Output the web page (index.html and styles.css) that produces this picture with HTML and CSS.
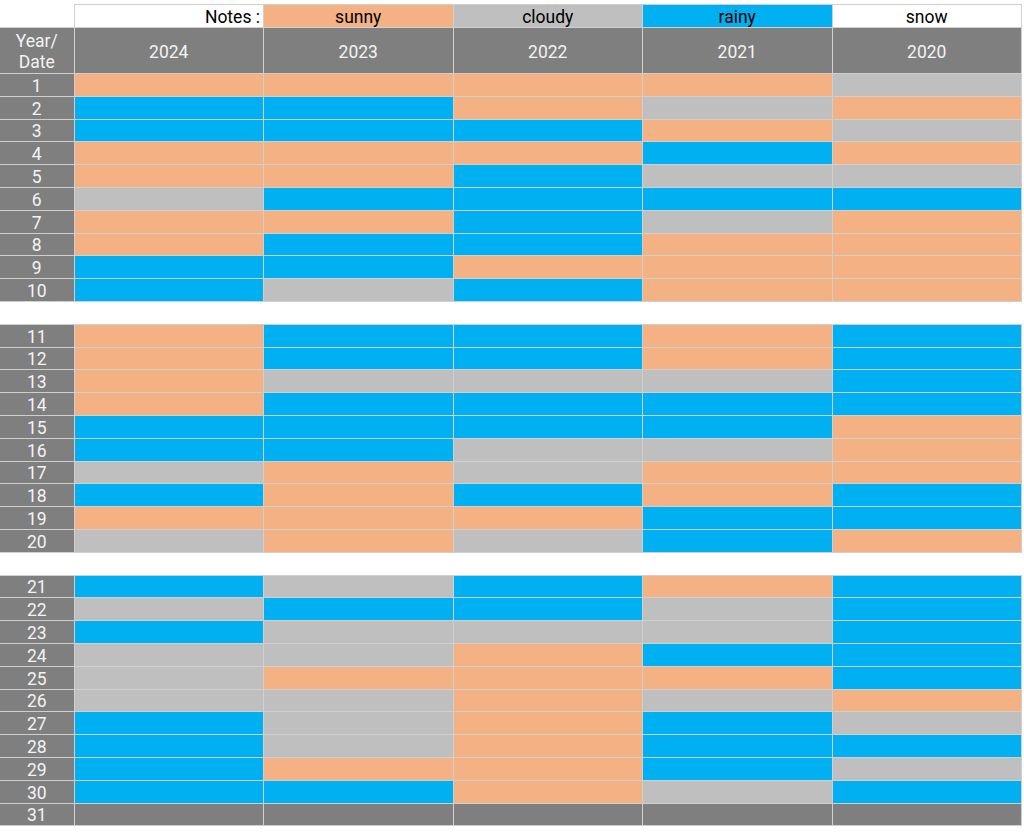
FILE: index.html
```html
<!DOCTYPE html>
<html>
<head>
<meta charset="utf-8">
<link rel="stylesheet" href="styles.css">
</head>
<body>
<table class="sheet">
<colgroup><col class="c-day"><col class="c-yr"><col class="c-yr"><col class="c-yr"><col class="c-yr"><col class="c-yr"></colgroup>
<tr class="notes"><td class="blank"></td><td class="label">Notes :</td><td class="s">sunny</td><td class="c">cloudy</td><td class="r">rainy</td><td class="w">snow</td></tr>
<tr class="head"><td class="g">Year/<br>Date</td><td class="g">2024</td><td class="g">2023</td><td class="g">2022</td><td class="g">2021</td><td class="g">2020</td></tr>
<tr class="d"><td class="g">1</td><td class="s"></td><td class="s"></td><td class="s"></td><td class="s"></td><td class="c"></td></tr>
<tr class="d"><td class="g">2</td><td class="r"></td><td class="r"></td><td class="s"></td><td class="c"></td><td class="s"></td></tr>
<tr class="d"><td class="g">3</td><td class="r"></td><td class="r"></td><td class="r"></td><td class="s"></td><td class="c"></td></tr>
<tr class="d"><td class="g">4</td><td class="s"></td><td class="s"></td><td class="s"></td><td class="r"></td><td class="s"></td></tr>
<tr class="d"><td class="g">5</td><td class="s"></td><td class="s"></td><td class="r"></td><td class="c"></td><td class="c"></td></tr>
<tr class="d"><td class="g">6</td><td class="c"></td><td class="r"></td><td class="r"></td><td class="r"></td><td class="r"></td></tr>
<tr class="d"><td class="g">7</td><td class="s"></td><td class="s"></td><td class="r"></td><td class="c"></td><td class="s"></td></tr>
<tr class="d"><td class="g">8</td><td class="s"></td><td class="r"></td><td class="r"></td><td class="s"></td><td class="s"></td></tr>
<tr class="d"><td class="g">9</td><td class="r"></td><td class="r"></td><td class="s"></td><td class="s"></td><td class="s"></td></tr>
<tr class="d"><td class="g">10</td><td class="r"></td><td class="c"></td><td class="r"></td><td class="s"></td><td class="s"></td></tr>
<tr class="gap"><td colspan="6"></td></tr>
<tr class="d"><td class="g">11</td><td class="s"></td><td class="r"></td><td class="r"></td><td class="s"></td><td class="r"></td></tr>
<tr class="d"><td class="g">12</td><td class="s"></td><td class="r"></td><td class="r"></td><td class="s"></td><td class="r"></td></tr>
<tr class="d"><td class="g">13</td><td class="s"></td><td class="c"></td><td class="c"></td><td class="c"></td><td class="r"></td></tr>
<tr class="d"><td class="g">14</td><td class="s"></td><td class="r"></td><td class="r"></td><td class="r"></td><td class="r"></td></tr>
<tr class="d"><td class="g">15</td><td class="r"></td><td class="r"></td><td class="r"></td><td class="r"></td><td class="s"></td></tr>
<tr class="d"><td class="g">16</td><td class="r"></td><td class="r"></td><td class="c"></td><td class="c"></td><td class="s"></td></tr>
<tr class="d"><td class="g">17</td><td class="c"></td><td class="s"></td><td class="c"></td><td class="s"></td><td class="s"></td></tr>
<tr class="d"><td class="g">18</td><td class="r"></td><td class="s"></td><td class="r"></td><td class="s"></td><td class="r"></td></tr>
<tr class="d"><td class="g">19</td><td class="s"></td><td class="s"></td><td class="s"></td><td class="r"></td><td class="r"></td></tr>
<tr class="d"><td class="g">20</td><td class="c"></td><td class="s"></td><td class="c"></td><td class="r"></td><td class="s"></td></tr>
<tr class="gap"><td colspan="6"></td></tr>
<tr class="d"><td class="g">21</td><td class="r"></td><td class="c"></td><td class="r"></td><td class="s"></td><td class="r"></td></tr>
<tr class="d"><td class="g">22</td><td class="c"></td><td class="r"></td><td class="r"></td><td class="c"></td><td class="r"></td></tr>
<tr class="d"><td class="g">23</td><td class="r"></td><td class="c"></td><td class="c"></td><td class="c"></td><td class="r"></td></tr>
<tr class="d"><td class="g">24</td><td class="c"></td><td class="c"></td><td class="s"></td><td class="r"></td><td class="r"></td></tr>
<tr class="d"><td class="g">25</td><td class="c"></td><td class="s"></td><td class="s"></td><td class="s"></td><td class="r"></td></tr>
<tr class="d"><td class="g">26</td><td class="c"></td><td class="c"></td><td class="s"></td><td class="c"></td><td class="s"></td></tr>
<tr class="d"><td class="g">27</td><td class="r"></td><td class="c"></td><td class="s"></td><td class="r"></td><td class="c"></td></tr>
<tr class="d"><td class="g">28</td><td class="r"></td><td class="c"></td><td class="s"></td><td class="r"></td><td class="r"></td></tr>
<tr class="d"><td class="g">29</td><td class="r"></td><td class="s"></td><td class="s"></td><td class="r"></td><td class="c"></td></tr>
<tr class="d"><td class="g">30</td><td class="r"></td><td class="r"></td><td class="s"></td><td class="c"></td><td class="r"></td></tr>
<tr class="d"><td class="g">31</td><td class="g"></td><td class="g"></td><td class="g"></td><td class="g"></td><td class="g"></td></tr>
</table>
</body>
</html>
```

FILE: styles.css
```css
html, body {
  margin: 0;
  padding: 0;
  background: #ffffff;
}
body {
  font-family: Roboto, "Liberation Sans", sans-serif;
  font-size: 17.5px;
  color: #000000;
}
.sheet {
  border-collapse: collapse;
  table-layout: fixed;
  width: 1022px;
  margin-top: 4px;
}
.c-day { width: 74px; }
.sheet td {
  border: 1px solid #cfcfcf;
  padding: 2px 0 0 0;
  text-align: center;
  vertical-align: middle;
  line-height: 18px;
  box-sizing: border-box;
}
.sheet td:first-child { border-left: none; }
.notes td { height: 23px; }
.notes td.blank { border: none; }
.notes td.label { text-align: right; padding-right: 3px; background: #ffffff; }
.head td { height: 46px; }
.head td:first-child { line-height: 21px; padding-top: 2px; }
.d td { height: 22.8px; }
.gap td { height: 22.8px; border-left: none; border-right: none; background: #ffffff; }
.g { background: #7f7f7f; color: #f3f3f3; }
.s { background: #f4b183; }
.c { background: #bfbfbf; }
.r { background: #00b0f0; }
.w { background: #ffffff; }
```
